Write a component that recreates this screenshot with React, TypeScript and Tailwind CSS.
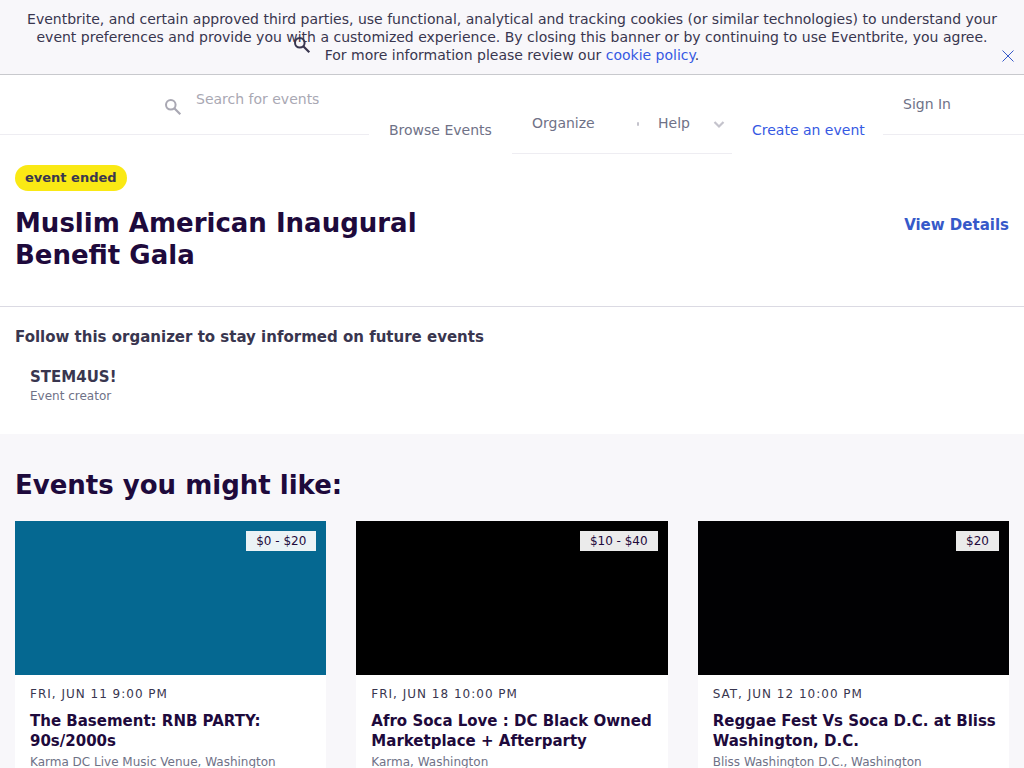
import type { ReactNode } from 'react'

interface EventItem {
  id: number
  date: string
  title: string
  venue: string
  price: string
  cover: string
}

const EVENTS: EventItem[] = [
  {
    id: 1,
    date: 'Fri, Jun 11 9:00 PM',
    title: 'The Basement: RNB PARTY: 90s/2000s',
    venue: 'Karma DC Live Music Venue, Washington',
    price: '$0 - $20',
    cover: 'bg-[#056891]',
  },
  {
    id: 2,
    date: 'Fri, Jun 18 10:00 PM',
    title: 'Afro Soca Love : DC Black Owned Marketplace + Afterparty',
    venue: 'Karma, Washington',
    price: '$10 - $40',
    cover: 'bg-black',
  },
  {
    id: 3,
    date: 'Sat, Jun 12 10:00 PM',
    title: 'Reggae Fest Vs Soca D.C. at Bliss Washington, D.C.',
    venue: 'Bliss Washington D.C., Washington',
    price: '$20',
    cover: 'bg-[#010103]',
  },
]

export default function App() {
  return (
    <div className="min-h-screen bg-white font-['DejaVu_Sans',sans-serif] text-sm font-normal text-[#39364f]">
      <CookieBanner />
      <Header />
      <main>
        <EventSummary />
        <Organizer />
        <RelatedEvents />
      </main>
    </div>
  )
}

function CookieBanner() {
  return (
    <div className="relative border-b border-[#c8c9cd] bg-[#f8f7fa] px-2 py-2.5 text-center leading-[18px]">
      <p>
        Eventbrite, and certain approved third parties, use functional, analytical and tracking cookies (or similar
        technologies) to understand your event preferences and provide you with a customized experience. By closing this
        banner or by continuing to use Eventbrite, you agree.
        <br />
        For more information please review our{' '}
        <a href="#cookies" className="text-[#3659e3]">
          cookie policy
        </a>
        .
      </p>
      <SearchIcon className="absolute top-9 left-[293px] size-[18px] text-[#39364f]" />
      <button type="button" aria-label="Close" className="absolute right-2.5 bottom-3 text-[#3659c9]">
        <svg viewBox="0 0 12 12" className="size-3" fill="none" stroke="currentColor">
          <path d="M.5 .5l11 11M11.5 .5l-11 11" />
        </svg>
      </button>
    </div>
  )
}

function Header() {
  return (
    <header className="flex items-start leading-[18px] text-[#6f7287]">
      <form className="flex h-[60px] min-w-0 flex-1 border-b border-[#eeedf2] pt-4 pl-[164px]">
        <SearchIcon className="mt-[7px] size-[18px] shrink-0 text-[#a9a8b3]" />
        <input
          type="search"
          aria-label="Search for events"
          placeholder="Search for events"
          className="ml-3.5 h-4 w-full min-w-0 bg-transparent outline-none placeholder:text-[#a9a8b3]"
        />
      </form>
      <NavLink className="w-[143px]">Browse Events</NavLink>
      <nav className="flex h-[79px] w-[220px] shrink-0 border-b border-[#eeedf2] pt-[39px] pl-5">
        <button type="button" className="flex h-[18px] w-[126px]">
          Organize
          <span className="mt-2 ml-[42px] h-1 w-0.5 rounded-full bg-[#c4c3cc]" />
        </button>
        <button type="button" className="flex h-[18px] w-[54px]">
          Help
        </button>
        <Chevron />
      </nav>
      <NavLink className="w-[151px] text-[#3659e3]">Create an event</NavLink>
      <div className="h-[60px] w-[141px] shrink-0 border-b border-[#eeedf2] pt-5 pl-5">
        <a href="#signin">Sign In</a>
      </div>
    </header>
  )
}

function NavLink({ children, className }: { children: ReactNode; className: string }) {
  return (
    <a href="#nav" className={`shrink-0 pt-[46px] pl-5 whitespace-nowrap ${className}`}>
      {children}
    </a>
  )
}

function EventSummary() {
  return (
    <section className="flex items-start justify-between border-b border-[#dbdae3] px-[15px] pt-[11px] pb-[35px]">
      <div>
        <span className="inline-block h-[26px] rounded-full bg-[#fae914] px-2.5 text-[13px] leading-[26px] font-bold text-[#39364f]">
          event ended
        </span>
        <h1 className="mt-4 max-w-[480px] text-[26px] leading-8 font-bold text-[#1e0a3c]">
          Muslim American Inaugural Benefit Gala
        </h1>
      </div>
      <a href="#details" className="mt-[50px] text-[15px] leading-5 font-semibold text-[#3659c9]">
        View Details
      </a>
    </section>
  )
}

function Organizer() {
  return (
    <section className="px-[15px] pt-5 pb-[29px]">
      <h2 className="text-[15px] leading-5 font-semibold">Follow this organizer to stay informed on future events</h2>
      <div className="mt-5 px-[15px]">
        <p className="text-[15px] leading-5 font-semibold">STEM4US!</p>
        <p className="text-xs leading-[18px] text-[#6f7287]">Event creator</p>
      </div>
    </section>
  )
}

function RelatedEvents() {
  return (
    <section className="bg-[#f8f7fa] px-[15px] pt-[35px] pb-10">
      <h2 className="text-[26px] leading-8 font-bold text-[#1e0a3c]">Events you might like:</h2>
      <div className="mt-5 grid grid-cols-3 gap-[30px]">
        {EVENTS.map((event) => (
          <EventCard key={event.id} event={event} />
        ))}
      </div>
    </section>
  )
}

function EventCard({ event }: { event: EventItem }) {
  return (
    <article className="bg-white">
      <div className={`relative h-[154px] ${event.cover}`}>
        <span className="absolute top-2.5 right-2.5 bg-white/92 px-2.5 text-xs leading-5 text-[#1e0a3c]">
          {event.price}
        </span>
      </div>
      <div className="pt-2.5 pr-1 pb-5 pl-[15px]">
        <p className="text-xs leading-[18px] tracking-[1px] uppercase">{event.date}</p>
        <h3 className="mt-2 text-[15px] leading-5 font-semibold text-[#1e0a3c]">{event.title}</h3>
        <p className="mt-0.5 text-xs leading-[18px] text-[#6f7287]">{event.venue}</p>
      </div>
    </article>
  )
}

function SearchIcon({ className }: { className: string }) {
  return (
    <svg viewBox="0 0 18 18" className={className} fill="none" stroke="currentColor" strokeWidth="2" aria-hidden="true">
      <circle cx="6.8" cy="6.8" r="4.8" />
      <path d="M10.3 10.3l6 6" strokeWidth="2.2" />
    </svg>
  )
}

function Chevron() {
  return (
    <svg
      viewBox="0 0 14 18"
      className="h-[18px] w-3.5 text-[#c4c3cc]"
      fill="none"
      stroke="currentColor"
      strokeWidth="2.2"
      aria-hidden="true"
    >
      <path d="M2.5 8l4.5 4.5 4.5-4.5" />
    </svg>
  )
}
